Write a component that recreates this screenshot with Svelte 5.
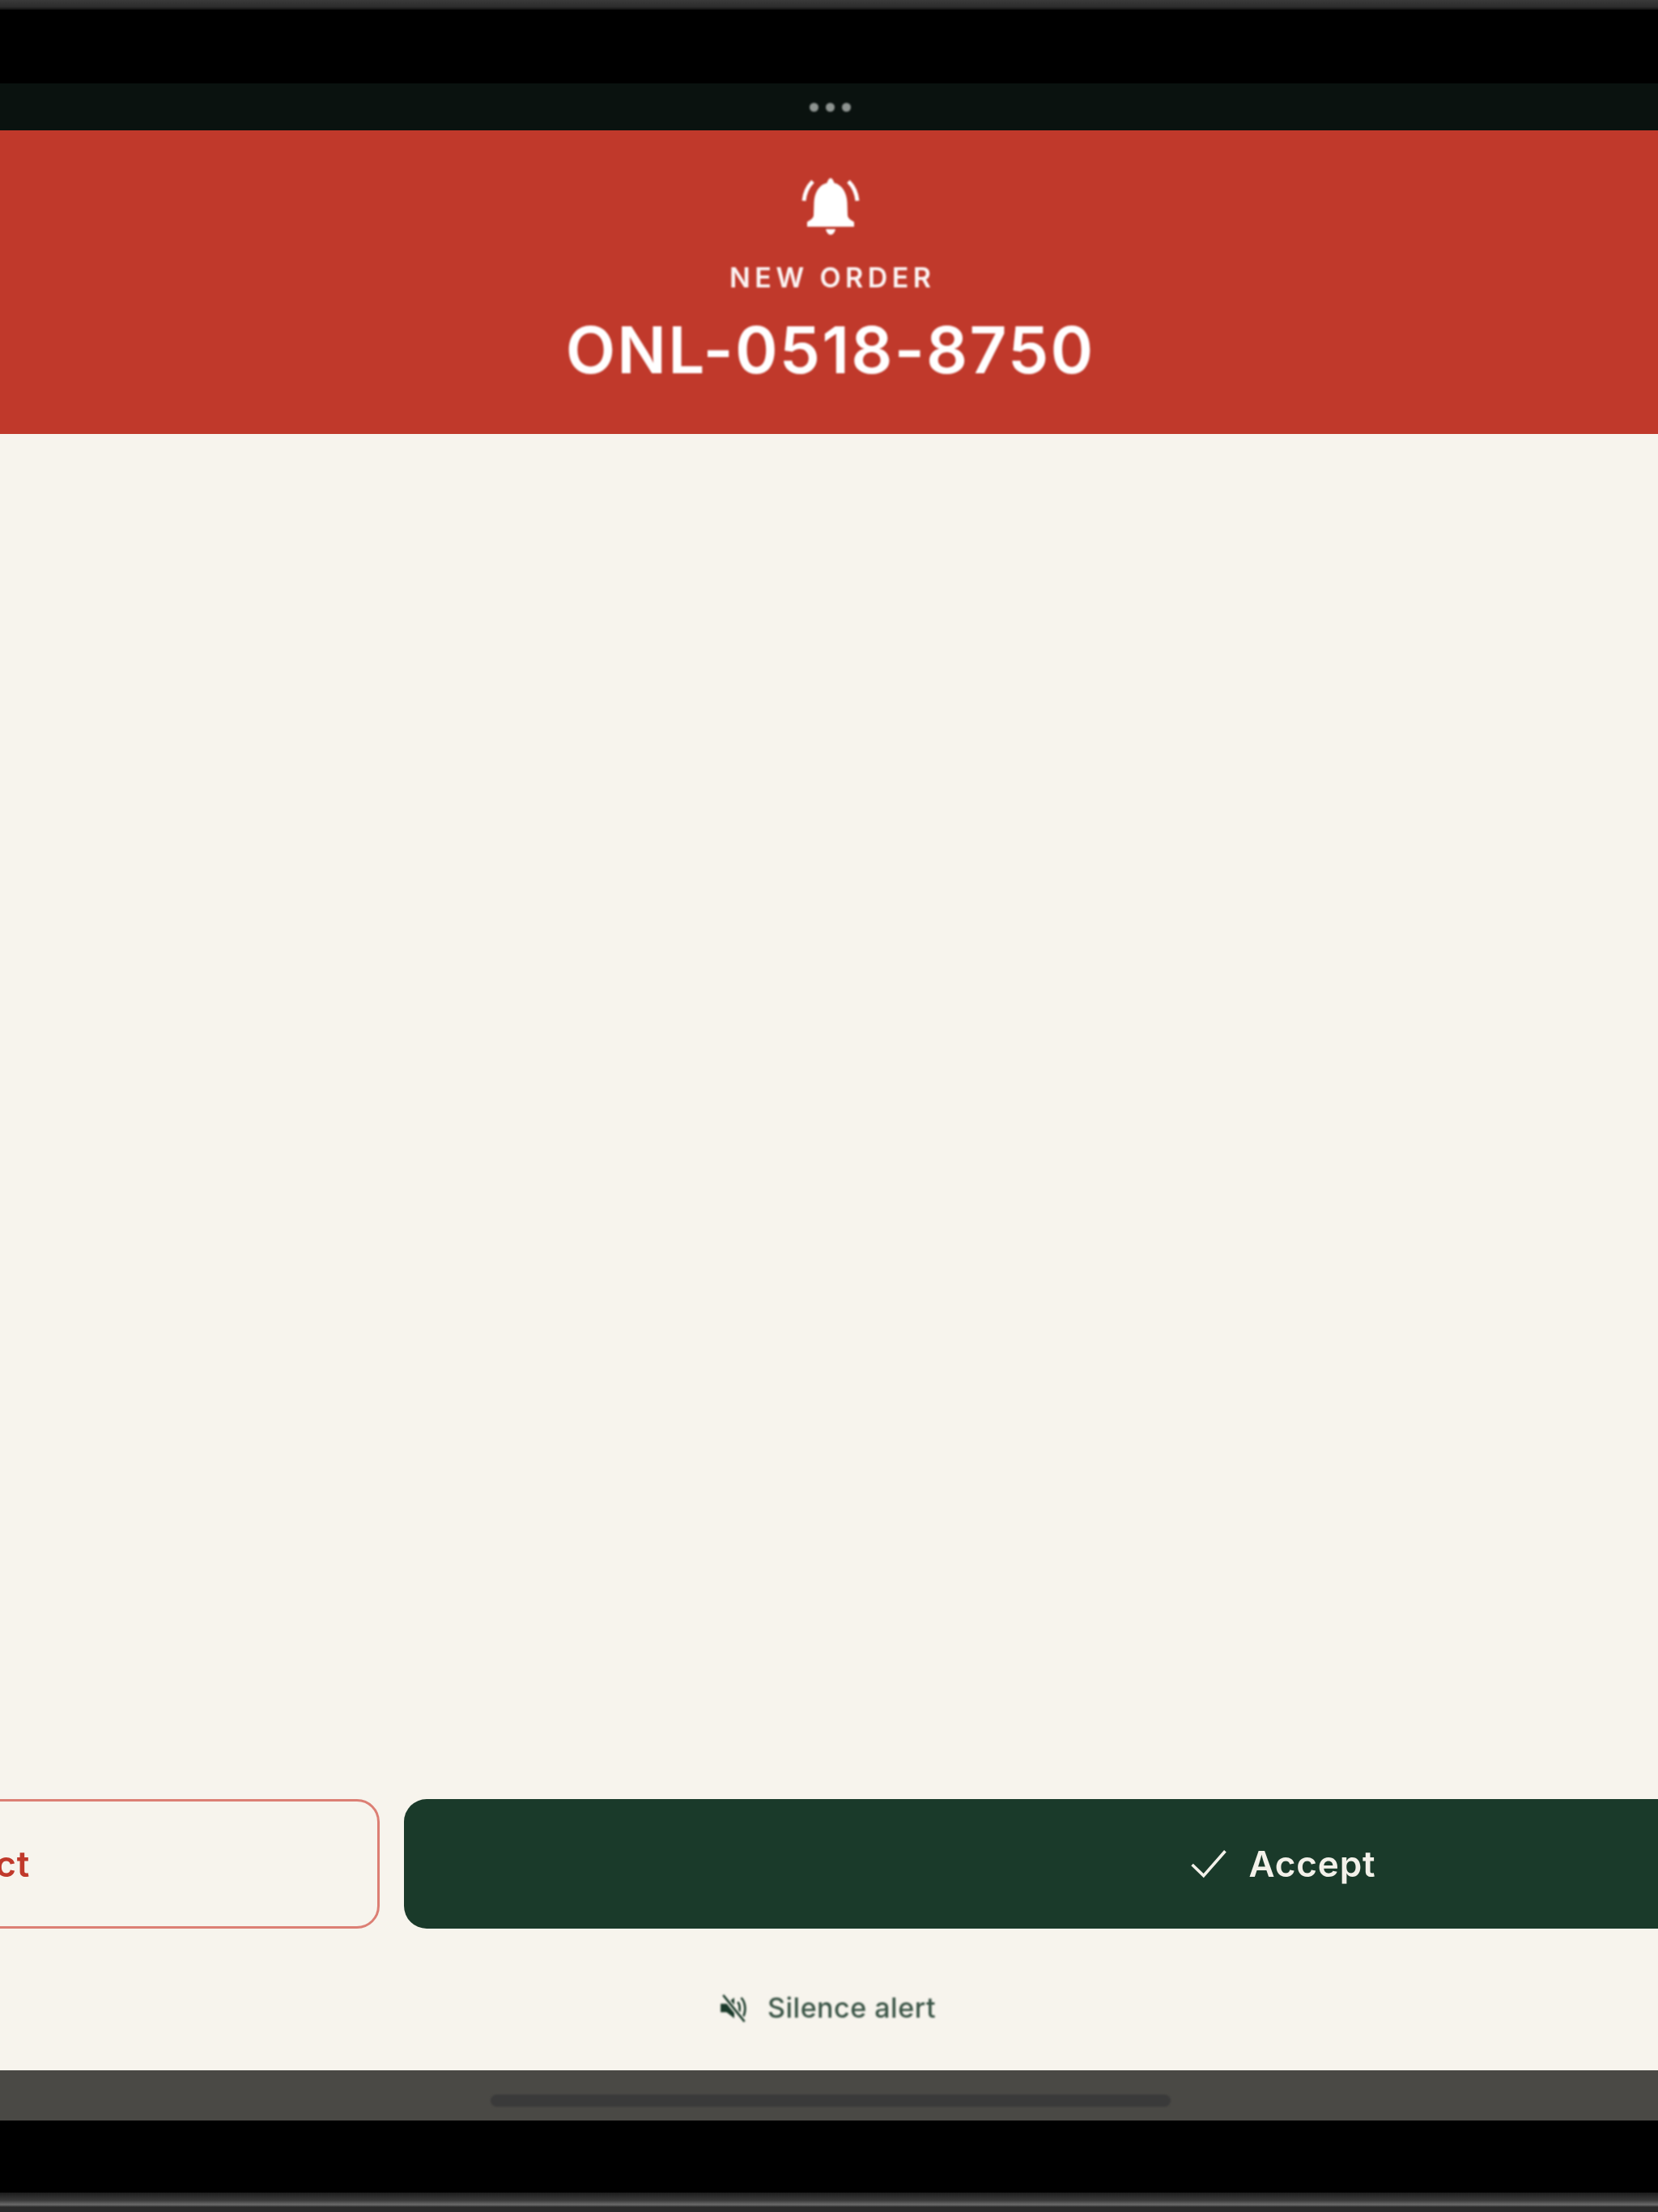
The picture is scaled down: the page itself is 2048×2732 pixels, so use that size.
<script>
	const orderNumber = "ONL-0518-8750";
</script>

<div class="device">
	<div class="bezel-top"></div>
	<div class="notch"></div>
	<div class="tabs">
		<span class="dot"></span>
		<span class="dot"></span>
		<span class="dot"></span>
	</div>

	<header class="alert">
		<svg class="bell" viewBox="0 0 80 80" fill="#fff">
			<path d="M40 4C42 4 43.5 7 44.5 10C54 12 60 22 60.5 34L61 50C61 53 65 56 69 58V64H11V58C15 56 19 53 19 50L19.5 34C20 22 26 12 35.5 10C36.5 7 38 4 40 4Z" />
			<path d="M34 67H46C45 71 43 74 40 74C37 74 35 71 34 67Z" />
			<path d="M7 32C8 22 12 14 18 8M73 32C72 22 68 14 62 8" fill="none" stroke="#fff" stroke-width="5" />
		</svg>
		<div class="label">NEW ORDER</div>
		<div class="number">{orderNumber}</div>
	</header>

	<main class="body">
		<div class="actions">
			<button class="reject">
				<svg viewBox="0 0 40 40" fill="none" stroke="currentColor" stroke-width="3.5">
					<path d="M8 8L32 32M32 8L8 32" />
				</svg>
				Reject
			</button>
			<button class="accept">
				<svg viewBox="0 0 42 34" fill="none" stroke="currentColor" stroke-width="3.5">
					<path d="M1.5 18L15 31L40.5 2" />
				</svg>
				Accept
			</button>
		</div>
		<button class="silence">
			<svg viewBox="0 0 36 36">
				<path d="M2 13H9L18 6V30L9 23H2Z" fill="#1a3a2a" />
				<path d="M22 11C25 14 25 21 23 25M26 6C32 12 32 24 27 30" fill="none" stroke="#1a3a2a" stroke-width="2.5" />
				<path d="M5 3L30 34" stroke="#f7f4ed" stroke-width="6" />
				<path d="M5 3L30 34" stroke="#1a3a2a" stroke-width="2.5" />
			</svg>
			Silence alert
		</button>
	</main>

	<div class="home-bar"><span class="handle"></span></div>
	<div class="chin"></div>
	<div class="bezel-bottom"></div>
</div>

<style>
	:global(body) {
		background: #000;
		overflow: hidden;
	}
	/* the frame sits a little right of the page centre, its right edge runs off the page */
	.device {
		width: 2051px;
		height: 2732px;
		display: flex;
		flex-direction: column;
		overflow: hidden;
		background: #000;
		font-family: Inter, "Liberation Sans", sans-serif;
	}
	.bezel-top {
		height: 12px;
		background: linear-gradient(#3a3a3a, #2c2c2c 70%, #111);
	}
	.notch {
		height: 91px;
		background: #000;
	}
	.tabs {
		height: 58px;
		background: #0a120f;
		display: flex;
		align-items: center;
		justify-content: center;
		gap: 9px;
	}
	.dot {
		width: 11px;
		height: 11px;
		border-radius: 50%;
		background: #8e9491;
		filter: blur(0.9px);
	}
	.alert {
		height: 375px;
		box-sizing: border-box;
		padding-top: 55px;
		background: #c0392b;
		color: #fff;
		display: flex;
		flex-direction: column;
		align-items: center;
	}
	.bell {
		width: 80px;
		height: 80px;
		flex: none;
		filter: blur(0.9px);
	}
	.label {
		margin-top: 27px;
		font-size: 34px;
		line-height: 40px;
		font-weight: 600;
		letter-spacing: 0.16em;
		margin-right: -0.16em;
		opacity: 0.95;
		filter: blur(0.9px);
	}
	.number {
		margin-top: 21px;
		font-size: 80px;
		line-height: 96px;
		font-weight: 600;
		letter-spacing: 0.027em;
		filter: blur(0.9px);
	}
	.body {
		flex: 1;
		background: #f7f4ed;
		display: flex;
		flex-direction: column;
		align-items: center;
		justify-content: flex-end;
	}
	.actions {
		display: grid;
		grid-template-columns: 1fr 2fr;
		gap: 30px;
		width: 3288px;
		flex: none;
		margin-left: 3px;
		filter: blur(0.7px);
	}
	button {
		font-family: inherit;
		border: 0;
		padding: 0;
		background: none;
		display: flex;
		align-items: center;
		justify-content: center;
	}
	.reject,
	.accept {
		height: 160px;
		border-radius: 28px;
		font-size: 44px;
		font-weight: 600;
		gap: 28px;
		letter-spacing: 0.02em;
	}
	.reject {
		box-sizing: border-box;
		border: 3px solid #dc7f74;
		color: #c0392b;
		gap: 42px;
	}
	.reject svg {
		width: 42px;
		height: 42px;
	}
	.accept {
		background: #1a3a2a;
		color: #f3f1ea;
	}
	.accept svg {
		width: 44px;
		height: 36px;
	}
	.silence {
		margin-top: 78px;
		margin-bottom: 57px;
		margin-right: 7px;
		gap: 22px;
		font-size: 34px;
		line-height: 40px;
		font-weight: 500;
		letter-spacing: 0.015em;
		color: #3b5547;
		filter: blur(0.9px);
	}
	.silence svg {
		width: 38px;
		height: 38px;
	}
	.home-bar {
		height: 62px;
		box-sizing: border-box;
		padding-top: 12px;
		flex: none;
		background: #4a4945;
		display: flex;
		align-items: center;
		justify-content: center;
	}
	.handle {
		width: 840px;
		height: 15px;
		border-radius: 8px;
		background: #3a3a3a;
		filter: blur(0.9px);
	}
	.chin {
		height: 89px;
		flex: none;
		background: #000;
	}
	.bezel-bottom {
		height: 24px;
		flex: none;
		background: linear-gradient(#1c1c1c, #3a3a3a 40%, #6a6a6a 62%, #2a2a2a 75%);
	}
</style>
